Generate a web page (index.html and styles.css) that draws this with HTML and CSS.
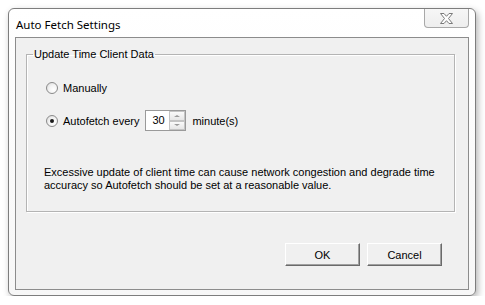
FILE: index.html
```html
<!DOCTYPE html>
<html lang="en">
<head>
<meta charset="UTF-8">
<title>Auto Fetch Settings</title>
<link rel="stylesheet" href="styles.css">
</head>
<body>
<div class="window">
  <div class="titlebar">
    <span class="title">Auto Fetch Settings</span>
    <button class="close" type="button" aria-label="Close">
      <svg width="13" height="11" viewBox="0 0 13 11">
        <polygon points="0.5,0.5 4,0.5 6.5,3.3 9,0.5 12.5,0.5 8.5,5.5 12.5,10.5 9,10.5 6.5,7.7 4,10.5 0.5,10.5 4.5,5.5" fill="#fdfdfd" stroke="#7a7a7a" stroke-width="1"/>
      </svg>
    </button>
  </div>
  <div class="client">
    <fieldset class="group">
      <legend>Update Time Client Data</legend>
      <div class="row row-manual">
        <span class="radio"></span>
        <span>Manually</span>
      </div>
      <div class="row row-auto">
        <span class="radio checked"></span>
        <span>Autofetch every</span>
        <span class="spin">
          <span class="spin-value">30</span>
          <span class="spin-buttons">
            <span class="spin-btn"><span class="arrow-up"></span></span>
            <span class="spin-btn"><span class="arrow-down"></span></span>
          </span>
        </span>
        <span>minute(s)</span>
      </div>
      <p class="note">Excessive update of client time can cause network congestion and degrade time<br>accuracy so Autofetch should be set at a reasonable value.</p>
    </fieldset>
    <div class="buttons">
      <button class="btn" type="button">OK</button>
      <button class="btn" type="button">Cancel</button>
    </div>
  </div>
</div>
</body>
</html>
```

FILE: styles.css
```css
body {
  margin: 0;
  background: #fff;
  font-family: "Liberation Sans", Arial, sans-serif;
  font-size: 11px;
  color: #000;
}

.window {
  box-sizing: border-box;
  margin: 8px 0 0 8px;
  width: 468px;
  height: 288px;
  border: 1px solid #7d7d7d;
  border-radius: 6px;
  background: linear-gradient(#ffffff, #f7f7f7);
  box-shadow: 2px 3px 7px rgba(0, 0, 0, 0.3);
  display: flex;
  flex-direction: column;
}

.titlebar {
  height: 28px;
  display: flex;
  justify-content: space-between;
  align-items: flex-start;
}

.title {
  padding: 8px 0 0 7px;
  font-family: "Noto Sans", "Liberation Sans", sans-serif;
  font-size: 11.5px;
  line-height: 16px;
}

.close {
  box-sizing: border-box;
  width: 45px;
  height: 19px;
  margin-right: 6px;
  padding: 0;
  border: 1px solid #a8a8a8;
  border-top: none;
  border-radius: 0 0 4px 4px;
  background: linear-gradient(#f6f6f6, #eeeeee);
  display: flex;
  align-items: center;
  justify-content: center;
}

.client {
  flex: 1;
  margin: 0 6px 5px 6px;
  border: 1px solid #8c8c8c;
  background: #f0f0f0;
  display: flex;
  flex-direction: column;
}

.group {
  margin: 10px 13px 0 10px;
  padding: 0 0 19px 0;
  border: 1px solid #b4b4b4;
  box-shadow: inset 1px 1px 0 #fff, 1px 1px 0 #fff;
}

.group legend {
  margin-left: 6px;
  padding: 0 1px;
  line-height: 13px;
}

.row {
  display: flex;
  align-items: center;
  padding-left: 19px;
}

.row-manual {
  height: 16px;
  margin-top: 19px;
}

.row-auto {
  height: 21px;
  margin-top: 14px;
}

.radio {
  box-sizing: border-box;
  width: 12px;
  height: 12px;
  margin-right: 5px;
  border: 1px solid #8a8a8a;
  border-radius: 50%;
  background: radial-gradient(circle at 65% 65%, #ffffff 0, #f4f4f4 45%, #d6d6d6 100%);
  display: flex;
  align-items: center;
  justify-content: center;
}

.radio.checked::after {
  content: "";
  width: 4px;
  height: 4px;
  border-radius: 50%;
  background: #1a1a1a;
}

.spin {
  box-sizing: border-box;
  width: 41px;
  height: 21px;
  margin: 0 6px 0 6px;
  border: 1px solid #9a9a9a;
  background: #fff;
  display: flex;
  align-items: stretch;
}

.spin-value {
  flex: 1;
  padding-left: 6px;
  line-height: 19px;
}

.spin-buttons {
  width: 16px;
  display: flex;
  flex-direction: column;
}

.spin-btn {
  flex: 1;
  box-sizing: border-box;
  border: 1px solid #c4c4c4;
  background: linear-gradient(#fafafa, #e6e6e6);
  display: flex;
  align-items: center;
  justify-content: center;
}

.arrow-up {
  border-left: 3px solid transparent;
  border-right: 3px solid transparent;
  border-bottom: 2px solid #9a9a9a;
}

.arrow-down {
  border-left: 3px solid transparent;
  border-right: 3px solid transparent;
  border-top: 2px solid #9a9a9a;
}

.note {
  margin: 35px 0 0 0;
  padding-left: 17px;
  line-height: 13px;
}

.buttons {
  display: flex;
  justify-content: flex-end;
  gap: 7px;
  margin: 31px 26px 0 0;
}

.btn {
  box-sizing: border-box;
  width: 75px;
  height: 23px;
  padding: 0;
  border: 1px solid;
  border-color: #ffffff #6a6a6a #6a6a6a #ffffff;
  box-shadow: inset -1px -1px 0 #a0a0a0;
  background: #f0f0f0;
  font-family: "Liberation Sans", Arial, sans-serif;
  font-size: 11px;
  color: #000;
}
```
